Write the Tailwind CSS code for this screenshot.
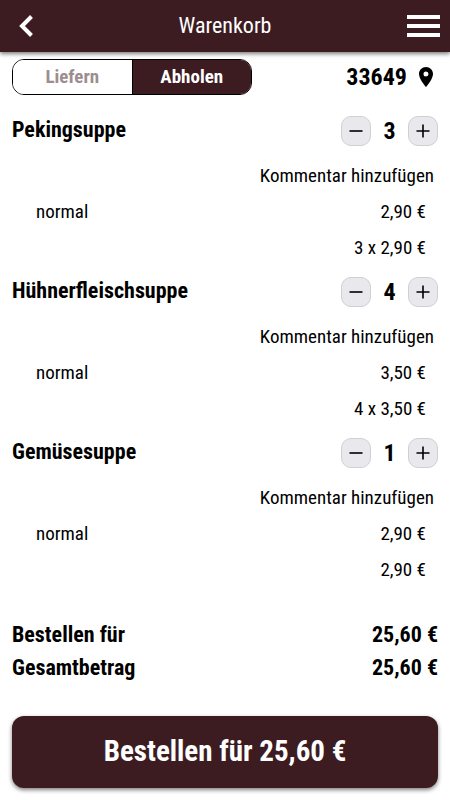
<!DOCTYPE html>
<html lang="de">
<head>
<meta charset="utf-8">
<meta name="viewport" content="width=device-width, initial-scale=1">
<title>Warenkorb</title>
<script src="https://cdn.jsdelivr.net/npm/@tailwindcss/browser@4"></script>
</head>
<body class="min-h-screen bg-white font-['Roboto_Condensed',Roboto,sans-serif] text-[19px] text-black">
<header class="grid h-[52px] grid-cols-[1fr_auto_1fr] items-center bg-[#3c1c20] px-[10px] text-white shadow-[0_2px_4px_rgba(0,0,0,0.5)]">
  <a href="#" aria-label="Zurück" class="justify-self-start pl-2">
    <svg class="h-6 w-4" viewBox="0 0 16 24" fill="none" stroke="currentColor" stroke-width="4"><path d="M13.500 2.500 4 12l9.500 9.500"/></svg>
  </a>
  <h1 class="text-[22px] leading-7">Warenkorb</h1>
  <button type="button" aria-label="Menü" class="flex w-[33px] flex-col gap-[5px] justify-self-end">
    <span class="h-1 w-full bg-white"></span>
    <span class="h-1 w-full bg-white"></span>
    <span class="h-1 w-full bg-white"></span>
  </button>
</header>
<main class="px-3 pt-[7px] pb-3">
  <div class="flex items-center justify-between">
    <div class="flex h-9 w-60 overflow-hidden rounded-xl border border-black font-bold">
      <button type="button" class="flex-1 bg-white text-[#9d8d8f]">Liefern</button>
      <button type="button" class="flex-1 border-l border-black bg-[#3c1c20] text-white">Abholen</button>
    </div>
    <button type="button" class="flex items-center gap-3 pr-[5px] text-2xl font-bold">33649
      <svg class="h-5 w-[14px]" viewBox="5 2 14 20" fill="currentColor"><path d="M12 2C8.130 2 5 5.130 5 9c0 5.250 7 13 7 13s7-7.750 7-13c0-3.870-3.130-7-7-7zm0 9.500a2.500 2.500 0 1 1 0-5 2.500 2.500 0 0 1 0 5z"/></svg>
    </button>
  </div>
  <section class="flex flex-col gap-3 pt-[21px]">
    <article>
      <div class="flex justify-between">
        <h2 class="text-[22px] leading-7 font-bold">Pekingsuppe</h2>
        <div class="flex items-center">
          <button type="button" aria-label="Weniger" class="flex size-[30px] items-center justify-center rounded-[10px] border border-[#d0d0d4] bg-[#e9e9ed]"><svg class="size-[14px]" viewBox="0 0 14 14" stroke="currentColor" stroke-width="1.600"><path d="M0.500 7h13"/></svg></button>
          <span class="w-[37px] text-center text-2xl leading-[30px] font-bold">3</span>
          <button type="button" aria-label="Mehr" class="flex size-[30px] items-center justify-center rounded-[10px] border border-[#d0d0d4] bg-[#e9e9ed]"><svg class="size-[14px]" viewBox="0 0 14 14" stroke="currentColor" stroke-width="1.600"><path d="M0.500 7h13M7 0.500v13"/></svg></button>
        </div>
      </div>
      <a href="#" class="mt-3 block pr-1 text-right leading-9">Kommentar hinzufügen</a>
      <div class="flex justify-between pr-3 pl-6 leading-9"><span>normal</span><span>2,90 €</span></div>
      <p class="pr-3 text-right leading-[35px]">3 x 2,90 €</p>
    </article>
    <article>
      <div class="flex justify-between">
        <h2 class="text-[22px] leading-7 font-bold">Hühnerfleischsuppe</h2>
        <div class="flex items-center">
          <button type="button" aria-label="Weniger" class="flex size-[30px] items-center justify-center rounded-[10px] border border-[#d0d0d4] bg-[#e9e9ed]"><svg class="size-[14px]" viewBox="0 0 14 14" stroke="currentColor" stroke-width="1.600"><path d="M0.500 7h13"/></svg></button>
          <span class="w-[37px] text-center text-2xl leading-[30px] font-bold">4</span>
          <button type="button" aria-label="Mehr" class="flex size-[30px] items-center justify-center rounded-[10px] border border-[#d0d0d4] bg-[#e9e9ed]"><svg class="size-[14px]" viewBox="0 0 14 14" stroke="currentColor" stroke-width="1.600"><path d="M0.500 7h13M7 0.500v13"/></svg></button>
        </div>
      </div>
      <a href="#" class="mt-3 block pr-1 text-right leading-9">Kommentar hinzufügen</a>
      <div class="flex justify-between pr-3 pl-6 leading-9"><span>normal</span><span>3,50 €</span></div>
      <p class="pr-3 text-right leading-[35px]">4 x 3,50 €</p>
    </article>
    <article>
      <div class="flex justify-between">
        <h2 class="text-[22px] leading-7 font-bold">Gemüsesuppe</h2>
        <div class="flex items-center">
          <button type="button" aria-label="Weniger" class="flex size-[30px] items-center justify-center rounded-[10px] border border-[#d0d0d4] bg-[#e9e9ed]"><svg class="size-[14px]" viewBox="0 0 14 14" stroke="currentColor" stroke-width="1.600"><path d="M0.500 7h13"/></svg></button>
          <span class="w-[37px] text-center text-2xl leading-[30px] font-bold">1</span>
          <button type="button" aria-label="Mehr" class="flex size-[30px] items-center justify-center rounded-[10px] border border-[#d0d0d4] bg-[#e9e9ed]"><svg class="size-[14px]" viewBox="0 0 14 14" stroke="currentColor" stroke-width="1.600"><path d="M0.500 7h13M7 0.500v13"/></svg></button>
        </div>
      </div>
      <a href="#" class="mt-3 block pr-1 text-right leading-9">Kommentar hinzufügen</a>
      <div class="flex justify-between pr-3 pl-6 leading-9"><span>normal</span><span>2,90 €</span></div>
      <p class="pr-3 text-right leading-[35px]">2,90 €</p>
    </article>
  </section>
  <dl class="mt-[31px] text-[22px] leading-[33px] font-bold">
    <div class="flex justify-between"><dt>Bestellen für</dt><dd>25,60 €</dd></div>
    <div class="flex justify-between"><dt>Gesamtbetrag</dt><dd>25,60 €</dd></div>
  </dl>
  <button type="button" class="mt-8 h-[72px] w-full rounded-xl bg-[#3c1c20] text-[29px] font-bold text-white shadow-[0_2px_4px_rgba(0,0,0,0.5)]">Bestellen für 25,60 €</button>
</main>
</body>
</html>
